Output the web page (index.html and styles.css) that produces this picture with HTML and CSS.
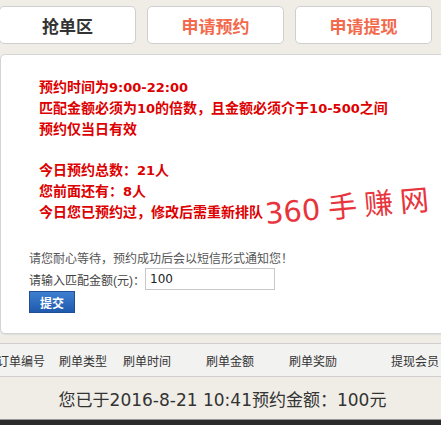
FILE: index.html
```html
<!DOCTYPE html>
<html lang="zh">
<head>
<meta charset="utf-8">
<title>抢单区</title>
<link rel="stylesheet" href="styles.css">
</head>
<body>
<div class="tabs">
  <div class="tab tab-active">抢单区</div>
  <div class="tab">申请预约</div>
  <div class="tab">申请提现</div>
</div>
<div class="panel">
  <div class="notice">
    <p>预约时间为<span class="num">9:00-22:00</span></p>
    <p>匹配金额必须为<span class="num">10</span>的倍数，且金额必须介于<span class="num">10-500</span>之间</p>
    <p>预约仅当日有效</p>
    <p class="blank">&nbsp;</p>
    <p>今日预约总数：<span class="num">21</span>人</p>
    <p>您前面还有：<span class="num">8</span>人</p>
    <p>今日您已预约过，修改后需重新排队</p>
  </div>
  <div class="watermark"><span class="wm-num">360</span><span class="wm-cjk">手赚网</span></div>
  <div class="form">
    <p class="hint">请您耐心等待，预约成功后会以短信形式通知您！</p>
    <div class="field"><label>请输入匹配金额(元)：</label><input class="amount" type="text" value="100"></div>
    <button class="submit">提交</button>
  </div>
</div>
<div class="thead">
  <span>订单编号</span><span>刷单类型</span><span>刷单时间</span><span>刷单金额</span><span>刷单奖励</span><span>提现会员</span>
</div>
<div class="status">您已于<span class="num">2016-8-21 10:41</span>预约金额：<span class="num">100</span>元</div>
<div class="bottombar"></div>
</body>
</html>
```
FILE: styles.css
```css
html, body {
  margin: 0;
  padding: 0;
  overflow: hidden;
}
body {
  background: #efede6;
  font-family: "Liberation Sans", "Noto Sans CJK SC", sans-serif;
  width: 441px;
  height: 425px;
  position: relative;
}
.num {
  font-family: "DejaVu Sans", sans-serif;
}
.tabs {
  display: flex;
  gap: 11px;
  padding: 6px 0 0 0;
  margin-left: -1px;
}
.tab {
  width: 135px;
  height: 36px;
  background: #fff;
  border: 1px solid #cfcfcf;
  border-radius: 5px;
  display: flex;
  align-items: center;
  justify-content: center;
  font-size: 17px;
  font-weight: bold;
  color: #f2694c;
}
.tab-active {
  color: #333;
}
.panel {
  position: relative;
  margin: 10px -8px 0 0;
  background: #fff;
  border: 1px solid #d4d4d4;
  border-radius: 5px;
  height: 278px;
  box-shadow: 0 1px 1px #ddd;
}
.notice {
  padding: 21px 0 0 38px;
}
.notice p {
  margin: 0;
  height: 21px;
  line-height: 21px;
  font-family: "Noto Sans CJK SC", sans-serif;
  font-size: 14px;
  font-weight: bold;
  color: #dd0000;
}
.notice p .num {
  font-family: "DejaVu Sans", sans-serif;
  font-size: 13px;
}
.notice p.blank {
  height: 20px;
}
.watermark {
  position: absolute;
  left: 264px;
  top: 142px;
  line-height: 1;
  font-size: 29px;
  color: #e8343c;
  transform: rotate(-5deg);
  transform-origin: left center;
  white-space: nowrap;
}
.wm-num {
  font-family: "DejaVu Sans", sans-serif;
  font-weight: normal;
}
.wm-cjk {
  font-family: "Noto Sans CJK SC", sans-serif;
  font-weight: normal;
  letter-spacing: 7px;
  margin-left: 8px;
}
.form {
  padding: 28px 0 0 28px;
}
.hint {
  margin: 0;
  font-size: 12px;
  line-height: 18px;
  color: #555;
}
.field {
  display: flex;
  align-items: center;
  font-size: 12px;
  color: #444;
}
.amount {
  width: 120px;
  height: 16px;
  border: 1px solid #c8c8c8;
  padding: 2px 4px;
  font-family: "DejaVu Sans", sans-serif;
  font-size: 12px;
  color: #222;
  margin: 0;
}
.submit {
  display: block;
  margin-top: 1px;
  width: 46px;
  height: 22px;
  border: 1px solid #1e4f96;
  background: linear-gradient(#3e7fd0, #1f5aad);
  color: #fff;
  font-weight: bold;
  font-size: 12px;
  font-family: "Liberation Sans", "Noto Sans CJK SC", sans-serif;
  padding: 0;
}
.thead {
  margin-top: 9px;
  height: 32px;
  background: #f2f2f1;
  border-top: 1px solid #cfcfcf;
  border-bottom: 1px solid #cfcfcf;
  display: grid;
  grid-template-columns: 62px 64px 83px 83px 102px 60px;
  align-items: center;
  margin-left: -3px;
  font-size: 12px;
  color: #333;
}
.status {
  height: 44px;
  line-height: 44px;
  text-align: center;
  font-family: "Noto Sans CJK SC", sans-serif;
  font-size: 17px;
  color: #333;
  padding-left: 4px;
}
.bottombar {
  position: absolute;
  left: 0;
  right: 0;
  bottom: 0;
  height: 5px;
  background: #2b2b2b;
  border-top: 1px solid #999;
}
```
